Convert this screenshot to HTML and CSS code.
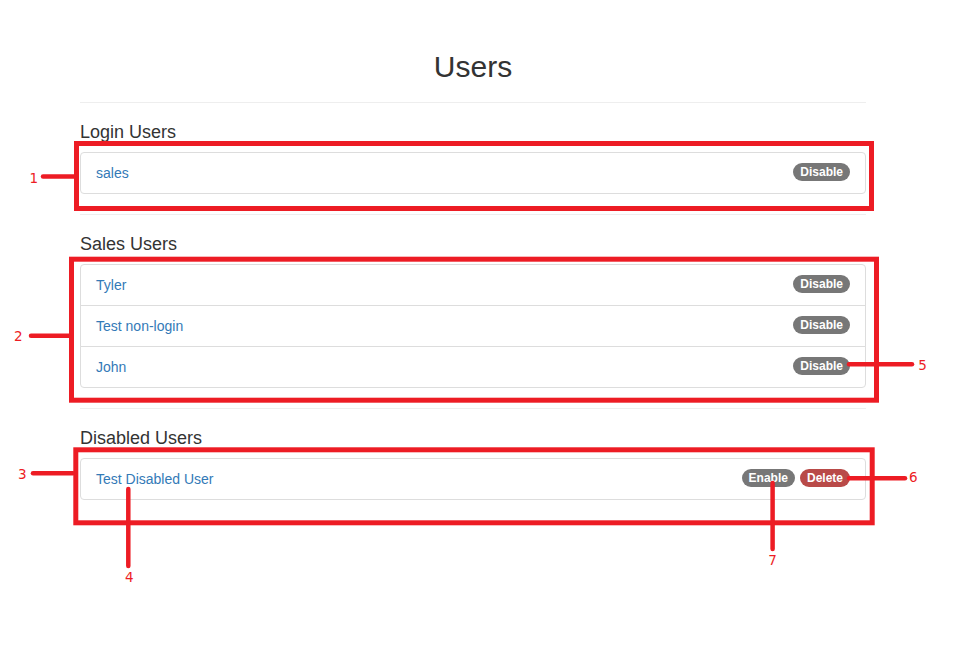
FILE: index.html
```html
<!DOCTYPE html>
<html lang="en">
<head>
<meta charset="utf-8">
<title>Users</title>
<link rel="stylesheet" href="styles.css">
</head>
<body>
<main class="page">
  <h1 class="title">Users</h1>
  <hr class="rule">

  <section class="group">
    <h3 class="group-title">Login Users</h3>
    <ul class="list">
      <li class="item"><a class="user" href="#">sales</a><span class="actions"><span class="badge">Disable</span></span></li>
    </ul>
  </section>
  <hr class="rule">

  <section class="group">
    <h3 class="group-title">Sales Users</h3>
    <ul class="list">
      <li class="item"><a class="user" href="#">Tyler</a><span class="actions"><span class="badge">Disable</span></span></li>
      <li class="item"><a class="user" href="#">Test non-login</a><span class="actions"><span class="badge">Disable</span></span></li>
      <li class="item"><a class="user" href="#">John</a><span class="actions"><span class="badge">Disable</span></span></li>
    </ul>
  </section>
  <hr class="rule">

  <section class="group">
    <h3 class="group-title">Disabled Users</h3>
    <ul class="list">
      <li class="item"><a class="user" href="#">Test Disabled User</a><span class="actions"><span class="badge">Enable</span><span class="badge badge-danger">Delete</span></span></li>
    </ul>
  </section>
</main>

<svg class="annotations" width="960" height="645" viewBox="0 0 960 645" xmlns="http://www.w3.org/2000/svg">
  <g class="boxes">
    <rect x="76.5" y="143.5" width="795" height="65"/>
    <rect x="71.5" y="259.2" width="805" height="141"/>
    <rect x="75.8" y="449.8" width="796.4" height="73"/>
  </g>
  <g class="leaders">
    <line x1="43" y1="176.5" x2="74" y2="176.5"/>
    <line x1="31" y1="335.7" x2="69" y2="335.7"/>
    <line x1="33" y1="473.3" x2="73" y2="473.3"/>
    <line x1="128.3" y1="489" x2="128.3" y2="566"/>
    <line x1="849" y1="364.3" x2="912" y2="364.3"/>
    <line x1="849" y1="478.2" x2="905" y2="478.2"/>
    <line x1="772.6" y1="483" x2="772.6" y2="549"/>
  </g>
  <g class="labels">
    <text x="29.5" y="182.7">1</text>
    <text x="14" y="340.7">2</text>
    <text x="18" y="479.3">3</text>
    <text x="125" y="581.7">4</text>
    <text x="918.3" y="370.3">5</text>
    <text x="909" y="481.7">6</text>
    <text x="768.3" y="565">7</text>
  </g>
</svg>
</body>
</html>
```
FILE: styles.css
```css
* { box-sizing: border-box; }

html, body {
  margin: 0;
  padding: 0;
  background: #fff;
}

body {
  font-family: "Liberation Sans", Arial, Helvetica, sans-serif;
  font-size: 14px;
  line-height: 20px;
  color: #333;
  width: 960px;
  height: 645px;
  overflow: hidden;
  position: relative;
}

.page {
  width: 786px;
  margin-left: 80px;
  padding-top: 50px;
}

.title {
  margin: 0 0 19px;
  font-size: 30px;
  line-height: 33px;
  font-weight: 400;
  text-align: center;
  color: #333;
}

.rule {
  margin: 0;
  border: 0;
  border-top: 1px solid #eee;
  height: 0;
}

.group {
  padding-top: 19px;
  padding-bottom: 20px;
}

.group-title {
  margin: 0 0 10px;
  font-size: 18px;
  line-height: 20px;
  font-weight: 400;
  color: #333;
}

.list {
  list-style: none;
  margin: 0;
  padding: 0;
}

.item {
  display: flex;
  justify-content: space-between;
  align-items: flex-start;
  padding: 10px 15px;
  border: 1px solid #ddd;
  margin-bottom: -1px;
  background: #fff;
}

.item:first-child {
  border-top-left-radius: 4px;
  border-top-right-radius: 4px;
}

.item:last-child {
  margin-bottom: 0;
  border-bottom-left-radius: 4px;
  border-bottom-right-radius: 4px;
}

.user {
  color: #337ab7;
  text-decoration: none;
}

.actions {
  display: flex;
  gap: 5px;
}

.badge {
  display: inline-block;
  padding: 3px 7px;
  font-size: 12px;
  font-weight: 700;
  line-height: 12px;
  color: #fff;
  background: #777;
  border-radius: 10px;
  white-space: nowrap;
}

.badge-danger {
  background: #b94a48;
}

.annotations {
  position: absolute;
  left: 0;
  top: 0;
  pointer-events: none;
}

.boxes rect {
  fill: none;
  stroke: #ed1c24;
  stroke-width: 5;
}

.leaders line {
  stroke: #ed1c24;
  stroke-width: 4.5;
  stroke-linecap: round;
}

.labels text {
  fill: #ed1c24;
  font-family: "DejaVu Sans", sans-serif;
  font-size: 13.5px;
}
```
